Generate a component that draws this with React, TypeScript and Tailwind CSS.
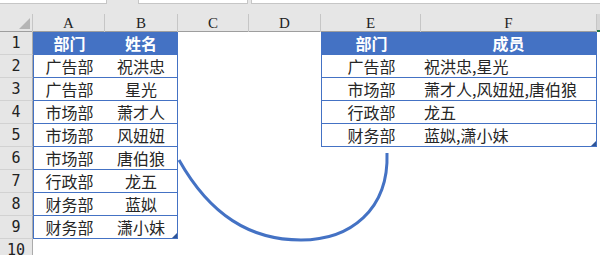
import React from "react";

const GRID =
  "grid grid-cols-[33px_72px_73px_71px_72px_100px_176px_3px]";

const cjk = { fontFamily: '"Noto Sans CJK SC", "Noto Sans", sans-serif' };

const people: [string, string][] = [
  ["广告部", "祝洪忠"],
  ["广告部", "星光"],
  ["市场部", "萧才人"],
  ["市场部", "风妞妞"],
  ["市场部", "唐伯狼"],
  ["行政部", "龙五"],
  ["财务部", "蓝姒"],
  ["财务部", "潇小妹"],
];

const groups: [string, string][] = [
  ["广告部", "祝洪忠,星光"],
  ["市场部", "萧才人,风妞妞,唐伯狼"],
  ["行政部", "龙五"],
  ["财务部", "蓝姒,潇小妹"],
];

function Handle() {
  return (
    <svg className="absolute right-0 bottom-0" width="5" height="5" viewBox="0 0 5 5">
      <polygon points="5,0 5,5 0,5" fill="#2f5597" />
    </svg>
  );
}

function TableCell({
  text,
  header,
  side,
  align = "center",
  last,
}: {
  text: string;
  header: boolean;
  side: "l" | "r";
  align?: "center" | "left";
  last?: boolean;
}) {
  return (
    <div
      className={
        "relative h-[23px] border-b border-[#4472c4] text-[16px] leading-[22px] whitespace-nowrap " +
        (side === "l" ? "border-l " : "border-r ") +
        (header ? "bg-[#4472c4] text-white font-bold text-center " : "bg-white text-[#262626] ") +
        (!header && align === "left" ? "text-left pl-[3px] " : "text-center ")
      }
      style={cjk}
    >
      {text}
      {last && side === "r" ? <Handle /> : null}
    </div>
  );
}

function Blank() {
  return <div className="h-[23px] bg-white" />;
}

export default function App() {
  const rows = Array.from({ length: 10 }, (_, i) => i + 1);
  return (
    <div className="relative w-[600px] h-[255px] overflow-hidden bg-[#e6e6e6]">
      {/* name box / formula bar edges */}
      <div className="flex h-[4px]">
        <div className="w-[107px] bg-white border-b border-r border-[#c6c6c6]" />
        <div className="w-[31px]" />
        <div className="w-[110px] bg-white border-b border-l border-r border-[#c6c6c6]" />
        <div className="w-[3px]" />
        <div className="flex-1 bg-white border-b border-l border-[#c6c6c6]" />
      </div>
      <div className="h-[10px]" />

      {/* column headers */}
      <div
        className={GRID + " h-[18px] border-b border-[#9e9e9e] text-[15px] leading-[18px] text-[#222]"}
        style={{ fontFamily: '"Liberation Serif", serif' }}
      >
        <div className="relative border-r border-[#c6c6c6]">
          <svg className="absolute left-[19px] top-[4px]" width="11" height="11" viewBox="0 0 11 11">
            <polygon points="11,0 11,11 0,11" fill="#b5b5b5" />
          </svg>
        </div>
        {["A", "B", "C", "D", "E", "F"].map((c) => (
          <div key={c} className="border-r border-[#c6c6c6] text-center">
            {c}
          </div>
        ))}
        <div className="bg-[#d6d6d6] border-b-2 border-[#217346]" />
      </div>

      {/* sheet rows */}
      {rows.map((r) => {
        const inA = r <= 9;
        const inE = r <= 5;
        const head = r === 1;
        const p = people[r - 2];
        const g = groups[r - 2];
        return (
          <div key={r} className={GRID}>
            <div
              className="h-[23px] border-b border-r border-[#d2d2d2] border-r-[#ababab] text-center text-[15px] leading-[23px] text-[#222]"
              style={{ fontFamily: '"DejaVu Sans Mono", monospace' }}
            >
              {r}
            </div>
            {inA ? (
              <>
                <TableCell text={head ? "部门" : p[0]} header={head} side="l" />
                <TableCell text={head ? "姓名" : p[1]} header={head} side="r" last={r === 9} />
              </>
            ) : (
              <>
                <Blank />
                <Blank />
              </>
            )}
            <Blank />
            <Blank />
            {inE ? (
              <>
                <TableCell text={head ? "部门" : g[0]} header={head} side="l" />
                <TableCell
                  text={head ? "成员" : g[1]}
                  header={head}
                  side="r"
                  align="left"
                  last={r === 5}
                />
              </>
            ) : (
              <>
                <Blank />
                <Blank />
              </>
            )}
            <Blank />
          </div>
        );
      })}

      {/* curved connector drawn over the sheet */}
      <svg
        className="absolute left-0 top-0 pointer-events-none"
        width="600"
        height="255"
        viewBox="0 0 600 255"
      >
        <path
          d="M179 160 C 210 215, 250 240, 301 240 C 350 240, 389 210, 387 153"
          fill="none"
          stroke="#4472c4"
          strokeWidth="3"
          strokeLinecap="butt"
        />
      </svg>
    </div>
  );
}
